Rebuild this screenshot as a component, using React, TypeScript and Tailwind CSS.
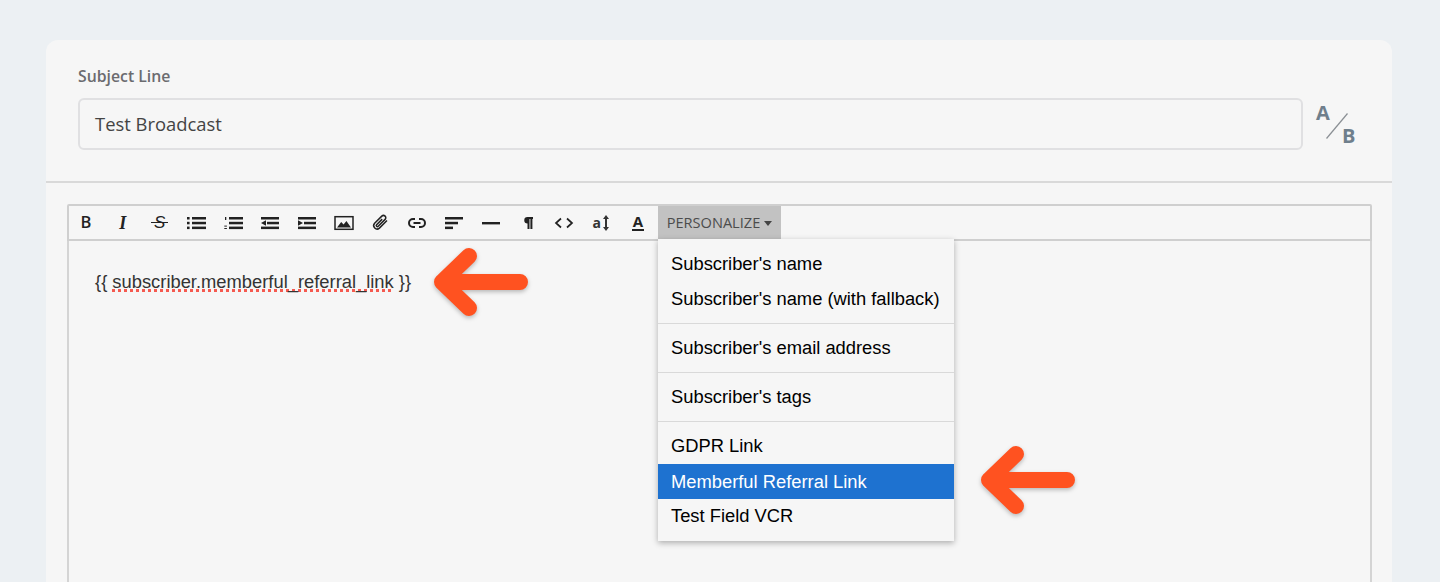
import type { ReactNode } from 'react'

const sans = 'font-["Liberation_Sans",Arial,sans-serif]'
const open = 'font-["Open_Sans",sans-serif]'

function Glyph({ children }: { children: ReactNode }) {
  return (
    <svg viewBox="0 0 20 20" className="h-5 w-5 fill-[#222]">
      {children}
    </svg>
  )
}

const bars = (x: number, w: number) => (
  <>
    <rect x={x} y="4" width={w} height="2.5" />
    <rect x={x} y="8.8" width={w} height="2.5" />
    <rect x={x} y="13.6" width={w} height="2.5" />
  </>
)

const tools: ReactNode[] = [
  <span className={`${open} text-[16.5px] font-semibold leading-none text-[#222]`}>B</span>,
  <span className='font-["Liberation_Serif",serif] text-[18px] font-bold italic leading-none text-[#222]'>I</span>,
  <span className={`${sans} relative text-[17px] italic leading-none text-[#222]`}>
    S<span className="absolute left-[-3px] top-[8px] h-[1.2px] w-[17px] bg-[#222]" />
  </span>,
  <Glyph>
    <rect x="1" y="4" width="2.6" height="2.5" />
    <rect x="1" y="8.8" width="2.6" height="2.5" />
    <rect x="1" y="13.6" width="2.6" height="2.5" />
    {bars(6, 14)}
  </Glyph>,
  <Glyph>
    <rect x="2" y="4" width="1.3" height="3" />
    <rect x="1.3" y="12.6" width="2.6" height="1" />
    <rect x="1.3" y="15" width="2.6" height="1" />
    {bars(6, 14)}
  </Glyph>,
  <Glyph>
    <rect x="1" y="4" width="18" height="2.5" />
    <rect x="7" y="8.8" width="12" height="2.5" />
    <rect x="1" y="13.6" width="18" height="2.5" />
    <path d="M1 10l5-2.8v5.6z" />
  </Glyph>,
  <Glyph>
    <rect x="1" y="4" width="18" height="2.5" />
    <rect x="7" y="8.8" width="12" height="2.5" />
    <rect x="1" y="13.6" width="18" height="2.5" />
    <path d="M6 10L1 7.2v5.6z" />
  </Glyph>,
  <svg viewBox="0 0 20 16" className="h-4 w-5">
    <rect x="1" y="1.7" width="18" height="12.6" fill="none" stroke="#222" strokeWidth="1.5" />
    <path d="M3 12.5l4.2-5.5 2.4 2.4L12.4 6 17 12.5z" fill="#222" />
  </svg>,
  <svg viewBox="0 0 20 20" className="h-5 w-5 fill-none stroke-[#222] stroke-[1.5]">
    <path d="M17 7.5l-7.6 7.6a3.4 3.4 0 0 1-4.8-4.8l7.2-7.2a2.3 2.3 0 0 1 3.3 3.3l-6.9 6.9a1.1 1.1 0 0 1-1.6-1.6l5.6-5.6" />
  </svg>,
  <svg viewBox="0 0 20 20" className="h-5 w-5 fill-none stroke-[#222] stroke-2">
    <path d="M8 6H6a4 4 0 0 0 0 8h2M12 6h2a4 4 0 0 1 0 8h-2M6.5 10h7" />
  </svg>,
  <Glyph>
    <rect x="1" y="4" width="18" height="2.5" />
    <rect x="1" y="8.8" width="13" height="2.5" />
    <rect x="1" y="13.6" width="8" height="2.5" />
  </Glyph>,
  <Glyph>
    <rect x="1" y="9" width="18" height="2.4" />
  </Glyph>,
  <Glyph>
    <path d="M9.5 4H15v2h-.6v10h-2V6h-.9v10h-2v-5.5a3.25 3.25 0 0 1 0-6.5z" />
  </Glyph>,
  <svg viewBox="0 0 20 20" className="h-5 w-5 fill-none stroke-[#222] stroke-[1.7]">
    <path d="M7 5.5L2 10l5 4.5M13 5.5l5 4.5-5 4.5" />
  </svg>,
  <span className="flex items-center">
    <span className={`${open} text-[14px] font-bold leading-none text-[#333]`}>a</span>
    <svg viewBox="0 0 8 16" className="ml-[1px] h-4 w-2 fill-[#333]">
      <path d="M4 0l3 4H5v8h2l-3 4-3-4h2V4H1z" />
    </svg>
  </span>,
  <span className="flex flex-col items-center">
    <span className={`${open} text-[15px] font-bold leading-[14px] text-[#222]`}>A</span>
    <span className="mt-[1px] h-[2px] w-[12px] bg-[#222]" />
  </span>,
]

function MenuItem({ label, active, last }: { label: string; active?: boolean; last?: boolean }) {
  return (
    <div
      className={`flex items-center px-[13px] text-[18.35px] ${last ? 'h-[34px]' : 'h-[35px]'} ${
        active ? 'mt-[1px] bg-[#1e72d0] text-white' : 'text-black'
      }`}
    >
      {label}
    </div>
  )
}

function Arrow({ className }: { className: string }) {
  return (
    <svg
      viewBox="0 0 96 68"
      className={`absolute h-[68px] w-[96px] fill-none stroke-[#ff5220] stroke-[16] drop-shadow-[0_2px_2px_rgba(0,0,0,0.25)] ${className}`}
      strokeLinecap="round"
      strokeLinejoin="round"
    >
      <path d="M36 8L9 34l27 26M9 34h78" />
    </svg>
  )
}

export default function App() {
  return (
    <div className="h-[582px] overflow-hidden bg-[#ecf0f3] pl-[46px] pr-[48px] pt-10">
      <div className="h-[600px] rounded-t-xl bg-[#f6f6f6]">
        <div className="h-[143px] border-b-2 border-[#d9d9d9] pl-8 pr-[36px] pt-[25px]">
          <label className={`${open} block text-[15.8px] font-semibold leading-[22px] text-[#6b6b6f]`}>
            Subject Line
          </label>
          <div className="mt-[11px] flex items-center">
            <div
              className={`${open} flex h-[52px] flex-1 items-center rounded-md border-2 border-[#e0e0e2] px-[15px] text-[18.4px] text-[#444]`}
            >
              Test Broadcast
            </div>
            <div className={`${open} relative ml-[13px] h-[52px] w-[40px] text-[20px] font-bold text-[#6f7f8c]`}>
              <span className="absolute left-0 top-[3px] leading-6">A</span>
              <svg viewBox="0 0 22 26" className="absolute left-[10px] top-[15px] h-[26px] w-[22px] stroke-[#8a8f94] stroke-[1.2]">
                <path d="M0.5 25.5L21.5 0.5" />
              </svg>
              <span className="absolute left-[26px] top-[26px] leading-6">B</span>
            </div>
          </div>
        </div>

        <div className="relative ml-[21px] mr-[20px] mt-[21px]">
          <div className="flex h-[37px] items-stretch rounded-t-[2px] border-2 border-[#cfcfcf]">
            {tools.map((tool, i) => (
              <div key={i} className="flex w-[36.8px] shrink-0 items-center justify-center first:ml-[-1.4px]">
                {tool}
              </div>
            ))}
            <div
              className={`${open} ml-[1.6px] flex w-[123px] items-center justify-center gap-1 bg-[#c2c2c2] text-[14.6px] text-[#4c4c4c]`}
            >
              PERSONALIZE
              <span className="mt-[1px] h-0 w-0 border-x-[4.5px] border-t-[5px] border-x-transparent border-t-[#444]" />
            </div>
          </div>
          <div className="h-[400px] border-2 border-t-0 border-[#d4d4d4] px-[26px] pt-[29px]">
            <p className={`${sans} text-[18.35px] leading-[24px] text-[#333]`}>
              {'{{ '}
              <span className="underline decoration-[#f55a50] decoration-dotted decoration-[2.5px] underline-offset-[1px] [text-decoration-skip-ink:none]">
                subscriber.memberful_referral_link
              </span>
              {' }}'}
            </p>
          </div>

          <Arrow className="left-[366px] top-[44px]" />

          <div
            className={`${sans} absolute left-[591px] top-[35px] h-[302px] w-[296px] bg-[#f6f6f6] pt-[7px] shadow-[0_2px_6px_rgba(0,0,0,0.3)]`}
          >
            <MenuItem label="Subscriber's name" />
            <MenuItem label="Subscriber's name (with fallback)" />
            <div className="mb-[6px] mt-[7px] h-[1px] bg-[#d9d9d9]" />
            <MenuItem label="Subscriber's email address" />
            <div className="mb-[6px] mt-[7px] h-[1px] bg-[#d9d9d9]" />
            <MenuItem label="Subscriber's tags" />
            <div className="mb-[6px] mt-[7px] h-[1px] bg-[#d9d9d9]" />
            <MenuItem label="GDPR Link" />
            <MenuItem label="Memberful Referral Link" active />
            <MenuItem label="Test Field VCR" last />
          </div>

          <Arrow className="left-[913px] top-[242px]" />
        </div>
      </div>
    </div>
  )
}
